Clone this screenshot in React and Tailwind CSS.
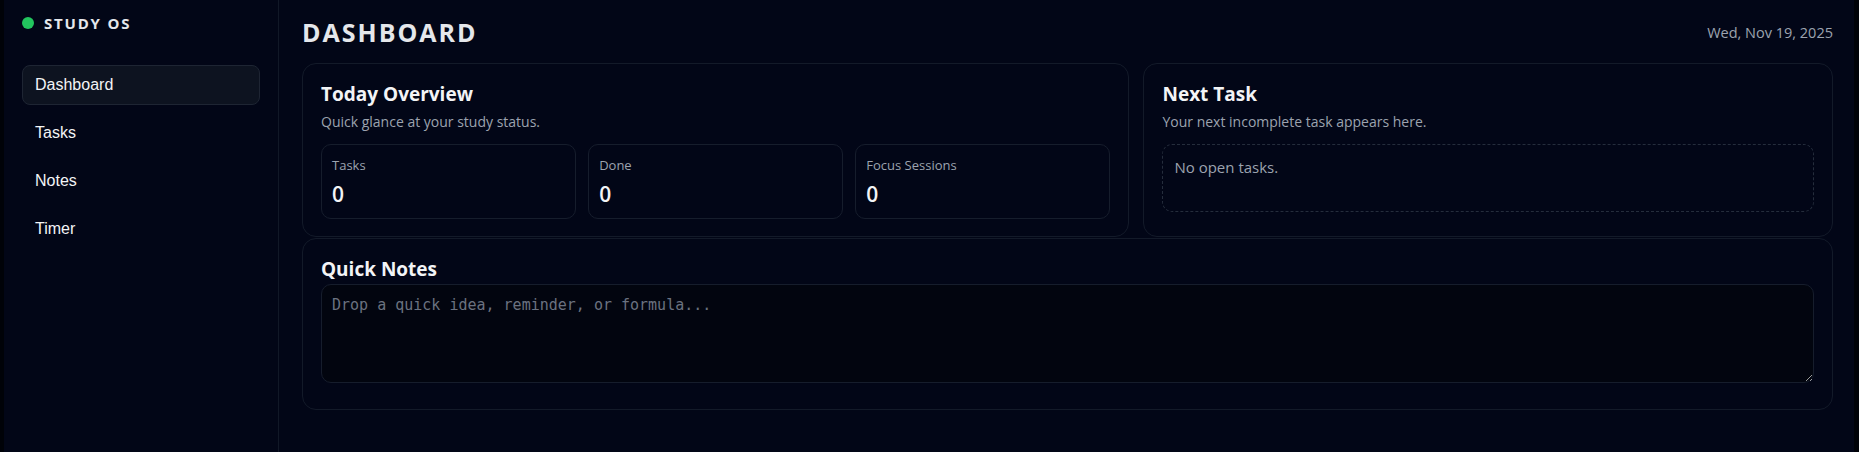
import React, { useState } from 'react';

const navItems = ['Dashboard', 'Tasks', 'Notes', 'Timer'];

function StatBox({ label, value }) {
  return (
    <div className="rounded-[10px] border border-[#161d2c] px-[10px] pt-3 pb-2.5">
      <div className="text-[13px] leading-4 text-[#9ca3af]">{label}</div>
      <div className="mt-[7px] text-[21px] font-semibold leading-7 text-[#f3f4f6]">{value}</div>
    </div>
  );
}

export default function App() {
  const [active, setActive] = useState('Dashboard');
  const [note, setNote] = useState('');

  return (
    <div
      className="flex h-screen bg-[#020617] text-[#e5e7eb] border-l-4 border-r-[5px] border-[#000208]"
      style={{ fontFamily: '"Open Sans", "Noto Sans", sans-serif' }}
    >
      {/* Sidebar */}
      <aside className="w-[275px] shrink-0 border-r border-[#111827] bg-[#020617] px-[18px] pt-[15px]">
        <div className="flex items-center gap-2.5">
          <span className="h-3 w-3 rounded-full bg-[#22c55e]" />
          <span className="text-[15px] font-bold leading-4 tracking-[0.12em] text-[#e5e7eb]">STUDY OS</span>
        </div>

        <nav className="mt-[34px] flex flex-col gap-2">
          {navItems.map((item) => (
            <button
              key={item}
              onClick={() => setActive(item)}
              className={`h-10 rounded-lg border px-3 text-left text-base ${
                active === item
                  ? 'border-[#1e2533] bg-[#0d1320] text-[#f3f4f6]'
                  : 'border-transparent text-[#f3f4f6]'
              }`}
              style={{ fontFamily: '"Liberation Sans", Arial, sans-serif' }}
            >
              {item}
            </button>
          ))}
        </nav>
      </aside>

      {/* Main */}
      <main className="flex-1 pl-[23px] pr-[21px] pt-[14px]">
        <header className="flex h-[37px] items-center justify-between">
          <h1 className="text-[25px] font-bold tracking-[0.08em] text-[#e5e7eb]">DASHBOARD</h1>
          <span className="text-[14.5px] text-[#9ca3af]">Wed, Nov 19, 2025</span>
        </header>

        <div className="mt-3 grid grid-cols-[1.2fr_1fr] gap-x-[14px] gap-y-px">
          <section className="rounded-[14px] border border-[#131a29] px-[18px] pt-[18px] pb-[17px]">
            <h2 className="text-[19px] font-bold leading-6 text-[#f3f4f6]">Today Overview</h2>
            <p className="mt-1.5 text-[14px] leading-5 text-[#9ca3af]">Quick glance at your study status.</p>
            <div className="mt-3 grid grid-cols-3 gap-3">
              <StatBox label="Tasks" value="0" />
              <StatBox label="Done" value="0" />
              <StatBox label="Focus Sessions" value="0" />
            </div>
          </section>

          <section className="rounded-[14px] border border-[#131a29] px-[18px] pt-[18px] pb-[17px]">
            <h2 className="text-[19px] font-bold leading-6 text-[#f3f4f6]">Next Task</h2>
            <p className="mt-1.5 text-[14px] leading-5 text-[#9ca3af]">Your next incomplete task appears here.</p>
            <div className="mt-3 min-h-[68px] rounded-[10px] border border-dashed border-[#252d3c] px-[11px] py-3 text-[15px] leading-5 text-[#9ca3af]">
              No open tasks.
            </div>
          </section>

          <section className="col-span-2 rounded-[14px] border border-[#131a29] px-[18px] pt-[18px] pb-[26px]">
            <h2 className="text-[19px] font-bold leading-6 text-[#f3f4f6]">Quick Notes</h2>
            <textarea
              value={note}
              onChange={(e) => setNote(e.target.value)}
              placeholder="Drop a quick idea, reminder, or formula..."
              className="mt-[3px] block h-[99px] w-full rounded-[10px] border border-[#161d2c] bg-[#02050f] p-2.5 text-[15px] leading-5 text-[#e5e7eb] placeholder:text-[#6b7280] outline-none"
              style={{ fontFamily: '"DejaVu Sans Mono", monospace' }}
            />
          </section>
        </div>
      </main>
    </div>
  );
}
